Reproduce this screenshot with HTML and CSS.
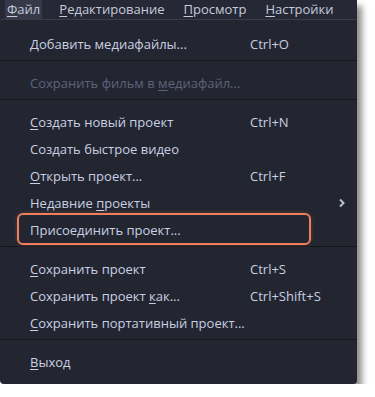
FILE: index.html
```html
<!DOCTYPE html>
<html lang="ru">
<head>
    <meta charset="UTF-8">
    <meta name="viewport" content="width=device-width, initial-scale=1.0">
    <title>Файл</title>
    <link rel="stylesheet" href="styles.css">
</head>
<body>
    <div class="window">
        <div class="menubar">
            <span class="menubar-item active"><u>Ф</u>айл</span>
            <span class="menubar-item"><u>Р</u>едактирование</span>
            <span class="menubar-item"><u>П</u>росмотр</span>
            <span class="menubar-item"><u>Н</u>астройки</span>
        </div>
        <div class="menu">
            <div class="menu-item"><span class="label"><u>Д</u>обавить медиафайлы...</span><span class="shortcut">Ctrl+O</span></div>
            <div class="separator"></div>
            <div class="menu-item disabled"><span class="label">Сохранить фильм в <u>м</u>едиафайл...</span></div>
            <div class="separator"></div>
            <div class="menu-item"><span class="label"><u>С</u>оздать новый проект</span><span class="shortcut">Ctrl+N</span></div>
            <div class="menu-item"><span class="label">Создать быстрое видео</span></div>
            <div class="menu-item"><span class="label"><u>О</u>ткрыть проект...</span><span class="shortcut">Ctrl+F</span></div>
            <div class="menu-item"><span class="label">Недавние <u>п</u>роекты</span>
                <svg class="arrow" width="8" height="10" viewBox="0 0 8 10"><path d="M2 1.5 L5.5 5 L2 8.5" fill="none" stroke="#b9c0d2" stroke-width="2"/></svg>
            </div>
            <div class="menu-item highlighted"><span class="label">Присоединить проект...</span></div>
            <div class="separator"></div>
            <div class="menu-item"><span class="label"><u>С</u>охранить проект</span><span class="shortcut">Ctrl+S</span></div>
            <div class="menu-item"><span class="label">Сохранить проект <u>к</u>ак...</span><span class="shortcut">Ctrl+Shift+S</span></div>
            <div class="menu-item"><span class="label"><u>С</u>охранить портативный проект...</span></div>
            <div class="separator"></div>
            <div class="menu-item"><span class="label"><u>В</u>ыход</span></div>
        </div>
    </div>
</body>
</html>
```

FILE: styles.css
```css
body {
    margin: 0;
    background-color: #ffffff;
    font-family: "Open Sans", "DejaVu Sans", sans-serif;
    font-size: 13px;
}
u {
    text-decoration: underline;
    text-underline-offset: 2px;
}
.window {
    width: 357px;
    background-color: #232631;
    border-bottom-right-radius: 4px;
    border-bottom-left-radius: 4px;
    box-shadow: 5px 6px 6px rgba(0, 0, 0, 0.45);
}
.menubar {
    display: flex;
    height: 19px;
    background-color: #262935;
    border-bottom: 1px solid #3a3d48;
    padding-left: 5px;
}
.menubar-item {
    color: #c4cbdc;
    line-height: 19px;
    padding: 0 2px;
    margin-right: 15px;
}
.menubar-item.active {
    background-color: #363a48;
}
.menu {
    padding: 10px 0 9px 0;
}
.menu-item {
    display: flex;
    align-items: center;
    height: 27px;
    padding-left: 30px;
    color: #c8d0e2;
    position: relative;
}
.menu-item .label {
    width: 220px;
    white-space: nowrap;
}
.menu-item .shortcut {
    white-space: nowrap;
}
.menu-item.disabled {
    color: #5c6479;
}
.menu-item .arrow {
    position: absolute;
    left: 338px;
    top: 9px;
}
.highlighted::before {
    content: "";
    position: absolute;
    left: 17px;
    top: -3px;
    width: 290px;
    height: 28px;
    border: 2px solid #ef7f5b;
    border-radius: 6px;
    box-shadow: 0 0 4px rgba(239, 127, 91, 0.25);
}
.separator {
    height: 1px;
    background-color: #12141a;
    margin: 3px 0 8px 0;
}
```
